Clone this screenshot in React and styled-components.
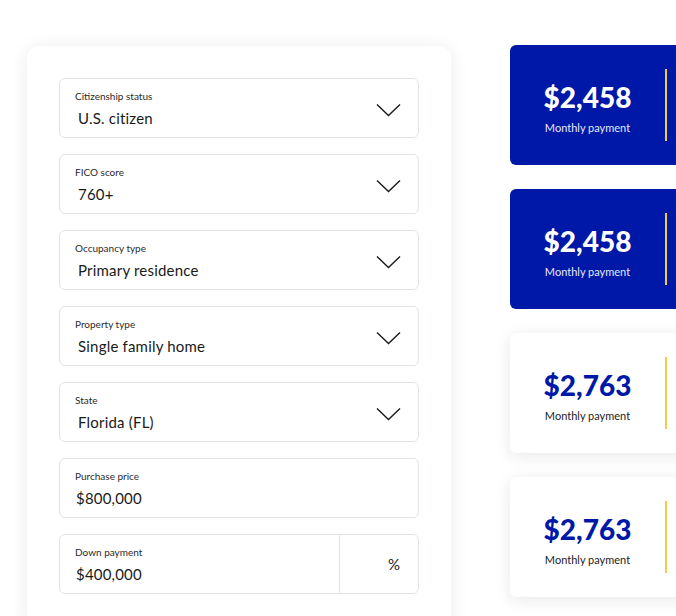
import React from "react";
import styled, { createGlobalStyle } from "styled-components";

const GlobalStyle = createGlobalStyle`
  html, body {
    margin: 0;
    padding: 0;
    background: #ffffff;
    overflow: hidden;
  }
  body {
    font-family: "Source Sans Pro", Lato, "Noto Sans", sans-serif;
    color: #1c1c1c;
  }
`;

const Page = styled.div`
  display: flex;
  align-items: flex-start;
  gap: 59px;
  padding: 46px 0 0 27px;
  width: 676px;
  height: 616px;
  box-sizing: border-box;
  overflow: hidden;
`;

const FormCard = styled.div`
  flex: 0 0 424px;
  box-sizing: border-box;
  padding: 32px 32px 40px;
  background: #fff;
  border-radius: 12px;
  box-shadow: 0 2px 18px rgba(20, 30, 60, 0.09);
  display: flex;
  flex-direction: column;
  gap: 16px;
`;

const Field = styled.div`
  display: flex;
  height: 60px;
  box-sizing: border-box;
  border: 1px solid #dfe3ec;
  border-radius: 6px;
  background: #fff;
`;

const FieldBody = styled.div`
  flex: 1;
  display: flex;
  flex-direction: column;
  justify-content: center;
  padding: 2px 15px 0;
`;

const Label = styled.span`
  font-size: 10px;
  line-height: 13px;
  color: #2a2a2a;
`;

const Value = styled.span`
  margin-top: 6px;
  padding-left: ${({ $indent }) => ($indent ? "3px" : "1px")};
  font-size: 15px;
  line-height: 19px;
  color: #1a1a1a;
  letter-spacing: 0.2px;
`;

const Chevron = styled.div`
  display: flex;
  align-items: center;
  padding: 4px 17px 0 0;
  color: #1a1a1a;
`;

const Suffix = styled.div`
  flex: 0 0 79px;
  display: flex;
  align-items: center;
  justify-content: flex-end;
  padding-right: 18px;
  box-sizing: border-box;
  border-left: 1px solid #dfe3ec;
  font-size: 15px;
  color: #1a1a1a;
`;

const Results = styled.div`
  flex: 0 0 360px;
  display: flex;
  flex-direction: column;
  gap: 24px;
  margin-top: -1px;
`;

const PayCard = styled.div`
  display: flex;
  align-items: center;
  height: 120px;
  border-radius: 6px;
  background: ${({ $active }) => ($active ? "#0018a8" : "#fff")};
  box-shadow: ${({ $active }) =>
    $active ? "none" : "0 3px 16px rgba(20, 30, 60, 0.1)"};
`;

const Amount = styled.div`
  flex: 0 0 155px;
  display: flex;
  flex-direction: column;
  align-items: center;
  padding-top: 4px;
`;

const Price = styled.span`
  font-size: 28px;
  line-height: 34px;
  font-weight: 900;
  color: ${({ $active }) => ($active ? "#fff" : "#0018a8")};
`;

const Caption = styled.span`
  margin-top: 7px;
  font-size: 11px;
  color: ${({ $active }) => ($active ? "#e6e9f8" : "#222")};
`;

const Divider = styled.div`
  width: 2px;
  height: 72px;
  background: #f2c94c;
`;

const ChevronIcon = () => (
  <svg width="25" height="14" viewBox="0 0 25 14" fill="none">
    <path d="M1 1.5 L12.5 12.5 L24 1.5" stroke="currentColor" strokeWidth="1.4" />
  </svg>
);

const selects = [
  ["Citizenship status", "U.S. citizen"],
  ["FICO score", "760+"],
  ["Occupancy type", "Primary residence"],
  ["Property type", "Single family home"],
  ["State", "Florida (FL)"],
];

const payments = [
  { amount: "$2,458", active: true },
  { amount: "$2,458", active: true },
  { amount: "$2,763", active: false },
  { amount: "$2,763", active: false },
];

const App = () => {
  return (
    <>
      <GlobalStyle />
      <Page>
        <FormCard>
          {selects.map(([label, value]) => (
            <Field key={label}>
              <FieldBody>
                <Label>{label}</Label>
                <Value $indent>{value}</Value>
              </FieldBody>
              <Chevron>
                <ChevronIcon />
              </Chevron>
            </Field>
          ))}
          <Field>
            <FieldBody>
              <Label>Purchase price</Label>
              <Value>$800,000</Value>
            </FieldBody>
          </Field>
          <Field>
            <FieldBody>
              <Label>Down payment</Label>
              <Value>$400,000</Value>
            </FieldBody>
            <Suffix>%</Suffix>
          </Field>
        </FormCard>
        <Results>
          {payments.map((p, i) => (
            <PayCard key={i} $active={p.active}>
              <Amount>
                <Price $active={p.active}>{p.amount}</Price>
                <Caption $active={p.active}>Monthly payment</Caption>
              </Amount>
              <Divider />
            </PayCard>
          ))}
        </Results>
      </Page>
    </>
  );
};

export default App;
